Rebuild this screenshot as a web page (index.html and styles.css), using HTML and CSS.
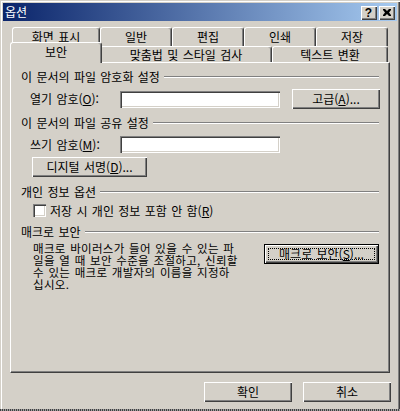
FILE: index.html
```html
<!DOCTYPE html>
<html lang="ko">
<head>
<meta charset="utf-8">
<title>옵션</title>
<link rel="stylesheet" href="styles.css">
</head>
<body>
<div class="window">
  <div class="titlebar">
    <span class="title">옵션</span>
    <div class="caption-buttons">
      <div class="cap-btn help">?</div>
      <div class="cap-btn close">
        <svg width="8" height="7" viewBox="0 0 8 7"><path d="M0 0h2l2 2 2-2h2v1l-2 2.5 2 2.5v1h-2l-2-2-2 2h-2v-1l2-2.5-2-2.5z" fill="#000"/></svg>
      </div>
    </div>
  </div>
  <div class="content">
    <div class="tabs">
      <div class="tab-row back">
        <div class="tab w88">화면 표시</div>
        <div class="tab w72">일반</div>
        <div class="tab w72">편집</div>
        <div class="tab w72">인쇄</div>
        <div class="tab w72">저장</div>
      </div>
      <div class="tab-row front">
        <div class="tab w88 selected">보안</div>
        <div class="tab w172">맞춤법 및 스타일 검사</div>
        <div class="tab w116">텍스트 변환</div>
      </div>
    </div>
    <div class="panel">
      <div class="group g1"><span>이 문서의 파일 암호화 설정</span><i class="etch"></i></div>
      <div class="row r-open">
        <span class="field-label">열기 암호(<u>O</u>):</span>
        <div class="edit"></div>
        <div class="btn adv">고급(<u>A</u>)...</div>
      </div>
      <div class="group g2"><span>이 문서의 파일 공유 설정</span><i class="etch"></i></div>
      <div class="row r-write">
        <span class="field-label">쓰기 암호(<u>M</u>):</span>
        <div class="edit"></div>
      </div>
      <div class="row r-sign">
        <div class="btn sign">디지털 서명(<u>D</u>)...</div>
      </div>
      <div class="group g3"><span>개인 정보 옵션</span><i class="etch"></i></div>
      <div class="row r-check">
        <div class="checkbox"></div>
        <span>저장 시 개인 정보 포함 안 함(<u>R</u>)</span>
      </div>
      <div class="group g4"><span>매크로 보안</span><i class="etch"></i></div>
      <div class="row r-macro">
        <p class="desc">매크로 바이러스가 들어 있을 수 있는 파<br>일을 열 때 보안 수준을 조절하고, 신뢰할<br>수 있는 매크로 개발자의 이름을 지정하<br>십시오.</p>
        <div class="btn macro default"><span class="focus">매크로 보안(<u>S</u>)...</span></div>
      </div>
    </div>
    <div class="footer">
      <div class="btn ok">확인</div>
      <div class="btn cancel">취소</div>
    </div>
  </div>
  <div class="bottom-edge"></div>
</div>
</body>
</html>
```

FILE: styles.css
```css
* { box-sizing: border-box; }
html, body { margin: 0; padding: 0; }
body {
  width: 400px;
  height: 411px;
  overflow: hidden;
  background: #d4d0c8;
  font-family: "Noto Sans CJK KR", "Noto Sans", sans-serif;
  font-size: 12px;
  color: #000;
}
.window {
  width: 400px;
  height: 411px;
  background: #d4d0c8;
  padding: 3px 3px 0 3px;
  display: flex;
  flex-direction: column;
  box-shadow: inset 1px 1px 0 #d4d0c8, inset 2px 2px 0 #fff, inset -1px 0 0 #404040, inset -2px 0 0 #808080;
}
.titlebar {
  height: 18px;
  flex-shrink: 0;
  background: linear-gradient(to right, #0a246a, #a6caf0);
  display: flex;
  align-items: center;
  justify-content: space-between;
  padding: 0 2px 0 2px;
}
.title {
  color: #fff;
  line-height: 18px;
  font-size: 12px;
}
.caption-buttons {
  display: flex;
  gap: 2px;
  margin-top: 1px;
}
.cap-btn {
  width: 16px;
  height: 14px;
  background: #d4d0c8;
  box-shadow: inset 1px 1px 0 #fff, inset -1px -1px 0 #404040, inset -2px -2px 0 #808080;
  display: flex;
  align-items: center;
  justify-content: center;
}
.cap-btn.help {
  font-family: "Liberation Sans", sans-serif;
  font-weight: bold;
  font-size: 12px;
  line-height: 14px;
  padding-right: 1px;
}
.cap-btn.close svg { display: block; margin-right: 1px; }

.content {
  padding: 6px 7px 0 7px;
  display: flex;
  flex-direction: column;
}
.tabs { display: flex; flex-direction: column; }
.tab-row { display: flex; align-items: flex-start; padding-left: 2px; }
.tab-row.back { height: 19px; }
.tab-row.front { height: 16px; }
.tab {
  height: 19px;
  flex-shrink: 0;
  text-align: center;
  line-height: 17px;
  background: #d4d0c8;
  border-top: 1px solid #fff;
  border-left: 1px solid #fff;
  border-right: 1px solid #404040;
  box-shadow: inset -1px 0 0 #808080;
  border-radius: 3px 3px 0 0;
  word-spacing: 1px;
}
.tab-row.front .tab { height: 16px; line-height: 15px; }
.tab.w88 { width: 88px; }
.tab.w72 { width: 72px; }
.tab.w172 { width: 172px; }
.tab.w116 { width: 116px; }
.tab-row.front .tab.selected {
  position: relative;
  z-index: 2;
  width: 92px;
  height: 21px;
  margin: -4px -2px -1px -2px;
  line-height: 17px;
}

.panel {
  height: 311px;
  background: #d4d0c8;
  border-top: 1px solid #fff;
  border-left: 1px solid #fff;
  border-right: 1px solid #404040;
  border-bottom: 1px solid #404040;
  box-shadow: inset -1px -1px 0 #808080;
  padding: 7px 10px 0 10px;
  display: flex;
  flex-direction: column;
  word-spacing: 1px;
}
.group {
  display: flex;
  align-items: center;
  height: 14px;
  line-height: 14px;
  white-space: nowrap;
}
.etch {
  flex: 1;
  height: 2px;
  margin-left: 4px;
  border-top: 1px solid #808080;
  border-bottom: 1px solid #fff;
}
.g2 { margin-top: 7px; }
.g3 { margin-top: 8px; }
.g4 { margin-top: 8px; }

.row { display: flex; align-items: center; white-space: nowrap; }
.field-label { width: 90px; flex-shrink: 0; line-height: 14px; }
.r-open { margin-top: 5px; padding-left: 9px; height: 20px; }
.r-write { margin-top: 6px; padding-left: 9px; height: 17px; }
.r-sign { margin-top: 4px; padding-left: 11px; }
.r-check { margin-top: 5px; padding-left: 12px; height: 13px; }
.r-macro { margin-top: 2px; padding-left: 12px; align-items: flex-start; }

.edit {
  width: 160px;
  height: 17px;
  flex-shrink: 0;
  background: #fff;
  box-shadow: inset 1px 1px 0 #808080, inset 2px 2px 0 #404040, inset -1px -1px 0 #fff, inset -2px -2px 0 #d4d0c8;
}
.btn {
  height: 20px;
  flex-shrink: 0;
  display: flex;
  align-items: center;
  justify-content: center;
  background: #d4d0c8;
  line-height: 14px;
  box-shadow: inset 1px 1px 0 #fff, inset -1px -1px 0 #404040, inset -2px -2px 0 #808080;
  white-space: nowrap;
}
.btn.adv { width: 88px; margin-left: 12px; }
.btn.sign { width: 115px; }
.checkbox {
  width: 13px;
  height: 13px;
  flex-shrink: 0;
  background: #fff;
  box-shadow: inset 1px 1px 0 #808080, inset 2px 2px 0 #404040, inset -1px -1px 0 #fff, inset -2px -2px 0 #d4d0c8;
  margin-right: 4px;
}
.desc {
  margin: 0;
  width: 220px;
  font-size: 11.5px;
  letter-spacing: 0.3px;
  line-height: 12px;
  white-space: nowrap;
  padding-top: 1px;
}
.btn.macro {
  width: 115px;
  margin-left: 12px;
  margin-top: 3px;
  border: 1px solid #000;
  box-shadow: inset 1px 1px 0 #fff, inset -1px -1px 0 #404040, inset -2px -2px 0 #808080;
  padding: 3px;
}
.btn.macro .focus {
  flex: 1;
  align-self: stretch;
  display: flex;
  align-items: center;
  justify-content: center;
  border: 1px dotted #000;
}
.footer {
  display: flex;
  justify-content: flex-end;
  gap: 11px;
  margin-top: 9px;
  margin-right: -1px;
}
.btn.ok, .btn.cancel { width: 88px; }
.bottom-edge {
  margin-top: auto;
  height: 2px;
  margin-left: -3px;
  margin-right: -3px;
  background: repeating-linear-gradient(90deg, #404040 0 1px, #a0a0a0 1px 2px);
}
```
